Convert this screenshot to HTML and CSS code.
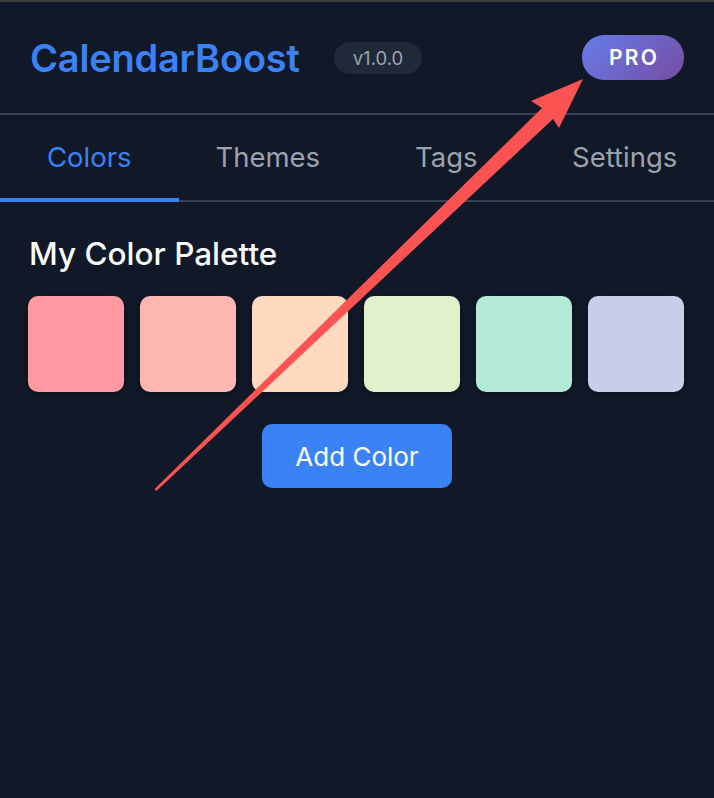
FILE: index.html
```html
<!DOCTYPE html>
<html lang="en">
<head>
  <meta charset="UTF-8" />
  <meta name="viewport" content="width=device-width, initial-scale=1.0" />
  <title>CalendarBoost</title>
  <link rel="stylesheet" href="styles.css">
</head>
<body>

  <div class="popup">
    <header class="header">
      <div class="brand">
        <h1 class="title">CalendarBoost</h1>
        <span class="version">v1.0.0</span>
      </div>
      <span class="pro">PRO</span>
    </header>

    <nav class="tabs">
      <div class="tab active">Colors</div>
      <div class="tab">Themes</div>
      <div class="tab">Tags</div>
      <div class="tab">Settings</div>
    </nav>

    <section class="panel">
      <h2 class="panel-title">My Color Palette</h2>
      <div class="swatches">
        <div class="swatch c1"></div>
        <div class="swatch c2"></div>
        <div class="swatch c3"></div>
        <div class="swatch c4"></div>
        <div class="swatch c5"></div>
        <div class="swatch c6"></div>
      </div>
      <div class="actions">
        <button class="btn">Add Color</button>
      </div>
    </section>
  </div>

  <!-- annotation arrow pointing at the PRO badge -->
  <svg class="arrow" width="714" height="798" viewBox="0 0 714 798">
    <polygon fill="#fb5252" points="583,79 559,128 553,119 156.4,491 154.6,489 542,108 531,101" />
  </svg>

</body>
</html>
```

FILE: styles.css
```css
body {
  margin: 0;
  background: #111827;
  font-family: Inter, 'Noto Sans', sans-serif;
  color: #f3f4f6;
}
.popup {
  border-top: 2px solid #3d3d3f;
  min-height: 796px;
}
.header {
  display: flex;
  align-items: center;
  justify-content: space-between;
  height: 111px;
  padding: 0 30px;
  border-bottom: 2px solid #374151;
}
.brand {
  display: flex;
  align-items: center;
  gap: 34px;
}
.title {
  margin: 0;
  font-size: 38px;
  font-weight: 600;
  color: #3b82f6;
  letter-spacing: -0.2px;
}
.version {
  background: #1f2937;
  color: #9ca3af;
  font-size: 18.5px;
  padding: 5px 19px;
  border-radius: 16px;
}
.pro {
  background: linear-gradient(135deg, #667eea, #764ba2);
  color: #fff;
  font-size: 21px;
  font-weight: 600;
  letter-spacing: 2.2px;
  padding: 10px 25px 10px 27px;
  border-radius: 22px;
}
.tabs {
  display: flex;
  border-bottom: 2px solid #374151;
}
.tab {
  flex: 1;
  text-align: center;
  font-size: 27.5px;
  color: #9ca3af;
  padding: 25px 0 24px;
  border-bottom: 4px solid transparent;
  margin-bottom: -2px;
}
.tab.active {
  color: #3b82f6;
  border-bottom-color: #3b82f6;
}
.panel {
  padding: 0 30px 0 28px;
}
.panel-title {
  margin: 32px 0 23px 1px;
  font-size: 31.5px;
  font-weight: 500;
  color: #f9fafb;
}
.swatches {
  display: flex;
  gap: 16px;
}
.swatch {
  width: 96px;
  height: 96px;
  border-radius: 10px;
  box-shadow: 0 2px 6px rgba(0,0,0,0.35);
}
.c1 { background: #ff9aa2; }
.c2 { background: #ffb7b2; }
.c3 { background: #ffdac1; }
.c4 { background: #e2f0cb; }
.c5 { background: #b5ead7; }
.c6 { background: #c7ceea; }
.actions {
  display: flex;
  justify-content: center;
  margin-top: 32px;
  padding-left: 2px;
}
.btn {
  width: 190px;
  height: 64px;
  border: none;
  border-radius: 10px;
  background: #3b82f6;
  color: #fff;
  font-family: inherit;
  font-size: 26px;
}
.arrow {
  position: absolute;
  top: 0;
  left: 0;
  pointer-events: none;
}
```
